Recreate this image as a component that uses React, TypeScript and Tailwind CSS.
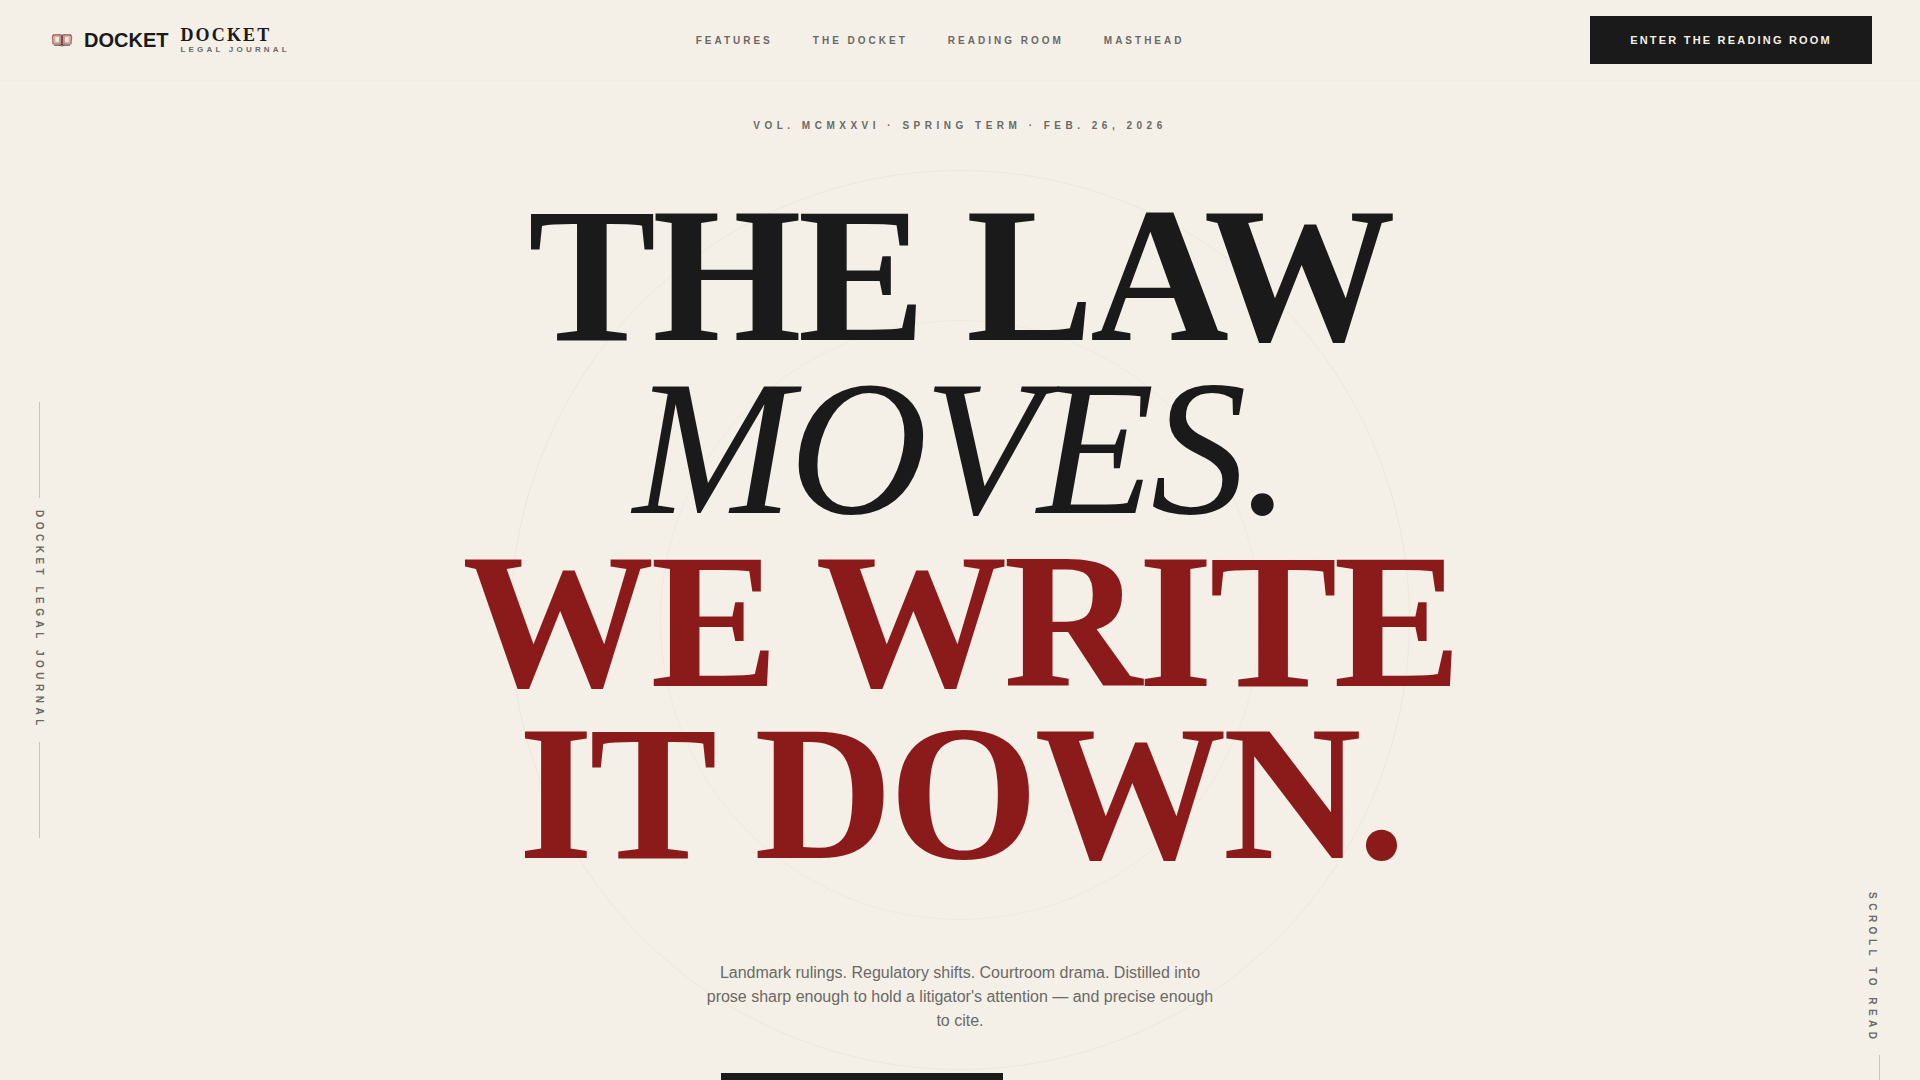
const navLinks = [
  { label: "Features", href: "#features" },
  { label: "The Docket", href: "#docket" },
  { label: "Reading Room", href: "#reading-room" },
  { label: "Masthead", href: "#masthead" },
];

const buttonClass =
  "h-12 bg-[#1a1a1a] px-10 text-[11px] font-bold uppercase tracking-[0.2em] text-[#f4f0e7] hover:bg-[#8b1a1a]";

function BookMark() {
  return (
    <svg viewBox="0 0 24 16" className="h-4 w-6" fill="none" aria-hidden="true">
      <path d="M3.4 3 10 2.6 12 3.4 14 2.6 20.6 3 21.6 5 21 11.8 14 12.2 12 13 10 12.2 3 11.8 2.4 5Z" fill="#d9b3aa" stroke="#a0716a" strokeWidth="1.3" strokeLinejoin="round" />
      <path d="M5.2 5.2 9.2 4.8v5l-3.6.2zM14.8 4.8l4 .4-.4 4.8-3.6-.2z" fill="#f3e6de" />
      <path d="M12 3.4V13" stroke="#5f3a36" strokeWidth="1.6" />
      <path d="M10 3.2v8.6M14 3.2v8.6" stroke="#a0716a" strokeWidth="0.8" />
      <path d="M4 13.2 10 13.4 12 14 14 13.4 20 13.2" stroke="#6d5450" strokeWidth="1" />
      <path d="M2.6 3.6 4 2.8M21.4 3.6 20 2.8" stroke="#6d5450" strokeWidth="0.9" />
    </svg>
  );
}

function Header() {
  return (
    <header className="fixed inset-x-0 top-0 z-20 flex items-center justify-between border-b border-[#1a1a1a]/1 bg-[#f4f0e7] px-12 py-4">
      <a href="#" className="flex items-center gap-3">
        <span className="flex items-center gap-2.5 pl-0.5">
          <BookMark />
          <span className="text-xl font-bold">DOCKET</span>
        </span>
        <span className="flex flex-col gap-0.5 font-['Liberation_Serif',serif]">
          <span className="text-lg leading-none font-bold tracking-[0.12em]">DOCKET</span>
          <span className="font-['Liberation_Sans',sans-serif] text-[8px] leading-2 font-bold tracking-[0.4em] text-[#6b6966] uppercase">
            Legal Journal
          </span>
        </span>
      </a>
      <nav className="flex gap-10">
        {navLinks.map((link) => (
          <a key={link.href} href={link.href} className="text-[10px] font-bold tracking-[0.3em] text-[#6b6966] uppercase hover:text-[#1a1a1a]">
            {link.label}
          </a>
        ))}
      </nav>
      <button type="button" className={buttonClass}>Enter the Reading Room</button>
    </header>
  );
}

function Rings() {
  return (
    <div className="pointer-events-none absolute inset-0 grid place-items-center overflow-hidden" aria-hidden="true">
      <div className="col-start-1 row-start-1 size-[900px] rounded-full border border-[#1a1a1a]/4" />
      <div className="col-start-1 row-start-1 size-[600px] rounded-full border border-[#1a1a1a]/3" />
    </div>
  );
}

export default function App() {
  return (
    <div className="min-h-screen bg-[#f4f0e7] font-['Liberation_Sans',sans-serif] text-[#1a1a1a]">
      <Header />
      <main className="relative flex flex-col items-center px-12 py-[118px] text-center">
        <Rings />

        <div className="absolute inset-y-0 left-8 flex flex-col items-center justify-center gap-3">
          <span className="h-24 w-px bg-[#1a1a1a]/20" />
          <span className="text-[10px] font-bold tracking-[0.45em] text-[#6b6966] uppercase [writing-mode:vertical-rl]">
            Docket Legal Journal
          </span>
          <span className="h-24 w-px bg-[#1a1a1a]/20" />
        </div>

        <div className="absolute right-10 bottom-16 flex flex-col items-end gap-3">
          <span className="text-[10px] font-bold tracking-[0.45em] text-[#6b6966] uppercase [writing-mode:vertical-rl]">
            Scroll to Read
          </span>
          <span className="h-30 w-px bg-[#1a1a1a]/20" />
        </div>

        <p className="relative mb-14 text-[10px] leading-4 font-bold tracking-[0.45em] text-[#6b6966] uppercase">
          Vol. MCMXXVI · Spring Term · Feb. 26, 2026
        </p>
        <h1 className="relative font-['Liberation_Serif',serif] text-[clamp(4rem,10vw,12rem)] leading-[0.9] font-bold tracking-[-0.02em]">
          <span className="block">THE LAW</span>
          <span className="block font-normal italic">MOVES.</span>
          <span className="block text-[#8b1a1a]">WE WRITE</span>
          <span className="block text-[#8b1a1a]">IT DOWN.</span>
        </h1>
        <p className="relative mt-20 max-w-lg text-base leading-6 text-[#6b6966]">
          Landmark rulings. Regulatory shifts. Courtroom drama. Distilled into prose sharp enough to hold a
          litigator's attention — and precise enough to cite.
        </p>
        <div className="relative mt-10 flex items-center gap-6">
          <button type="button" className={buttonClass}>Enter the Reading Room</button>
          <a href="#docket" className="min-w-43 text-[11px] font-bold tracking-[0.2em] uppercase">The Docket</a>
        </div>
      </main>
    </div>
  );
}
